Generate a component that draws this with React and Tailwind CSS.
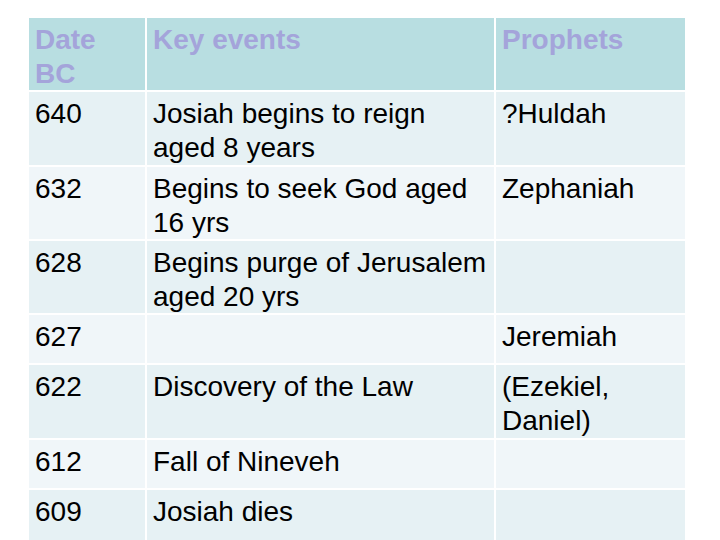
import React from 'react'

const rows = [
  { date: '640', event: ['Josiah begins to reign', 'aged 8 years'], prophet: ['?Huldah'], h: 'h-[73px]', tone: 'bg-[#e6f1f4]' },
  { date: '632', event: ['Begins to seek God aged', '16 yrs'], prophet: ['Zephaniah'], h: 'h-[72px]', tone: 'bg-[#f0f6f9]' },
  { date: '628', event: ['Begins purge of Jerusalem', 'aged 20 yrs'], prophet: [], h: 'h-[72px]', tone: 'bg-[#e6f1f4]' },
  { date: '627', event: [], prophet: ['Jeremiah'], h: 'h-[48px]', tone: 'bg-[#f0f6f9]' },
  { date: '622', event: ['Discovery of the Law'], prophet: ['(Ezekiel,', 'Daniel)'], h: 'h-[73px]', tone: 'bg-[#e6f1f4]' },
  { date: '612', event: ['Fall of Nineveh'], prophet: [], h: 'h-[48px]', tone: 'bg-[#f0f6f9]' },
  { date: '609', event: ['Josiah dies'], prophet: [], h: 'h-[50px]', tone: 'bg-[#e6f1f4]' },
]

const Lines = ({ lines }) => (
  <>
    {lines.map((l, i) => (
      <div key={i} className="whitespace-nowrap">{l}</div>
    ))}
  </>
)

const Cell = ({ className, children }) => (
  <div className={`pl-[6px] pt-[5px] overflow-visible ${className}`}>{children}</div>
)

export default function App() {
  return (
    <div
      className="w-[720px] h-[540px] bg-white overflow-hidden pt-[18px] pl-[29px]"
      style={{ fontFamily: '"Liberation Sans", Arial, sans-serif' }}
    >
      <div className="grid grid-cols-[116px_347px_189px] gap-[2px] text-[28px] leading-[34px] text-black">
        {/* Header */}
        <Cell className="h-[72px] bg-[#b8dee1] font-bold text-[#a4a4da]">
          <Lines lines={['Date', 'BC']} />
        </Cell>
        <Cell className="h-[72px] bg-[#b8dee1] font-bold text-[#a4a4da]">Key events</Cell>
        <Cell className="h-[72px] bg-[#b8dee1] font-bold text-[#a4a4da]">Prophets</Cell>

        {rows.map(r => (
          <React.Fragment key={r.date}>
            <Cell className={`${r.h} ${r.tone}`}>{r.date}</Cell>
            <Cell className={`${r.h} ${r.tone}`}>
              <Lines lines={r.event} />
            </Cell>
            <Cell className={`${r.h} ${r.tone}`}>
              <Lines lines={r.prophet} />
            </Cell>
          </React.Fragment>
        ))}
      </div>
    </div>
  )
}
